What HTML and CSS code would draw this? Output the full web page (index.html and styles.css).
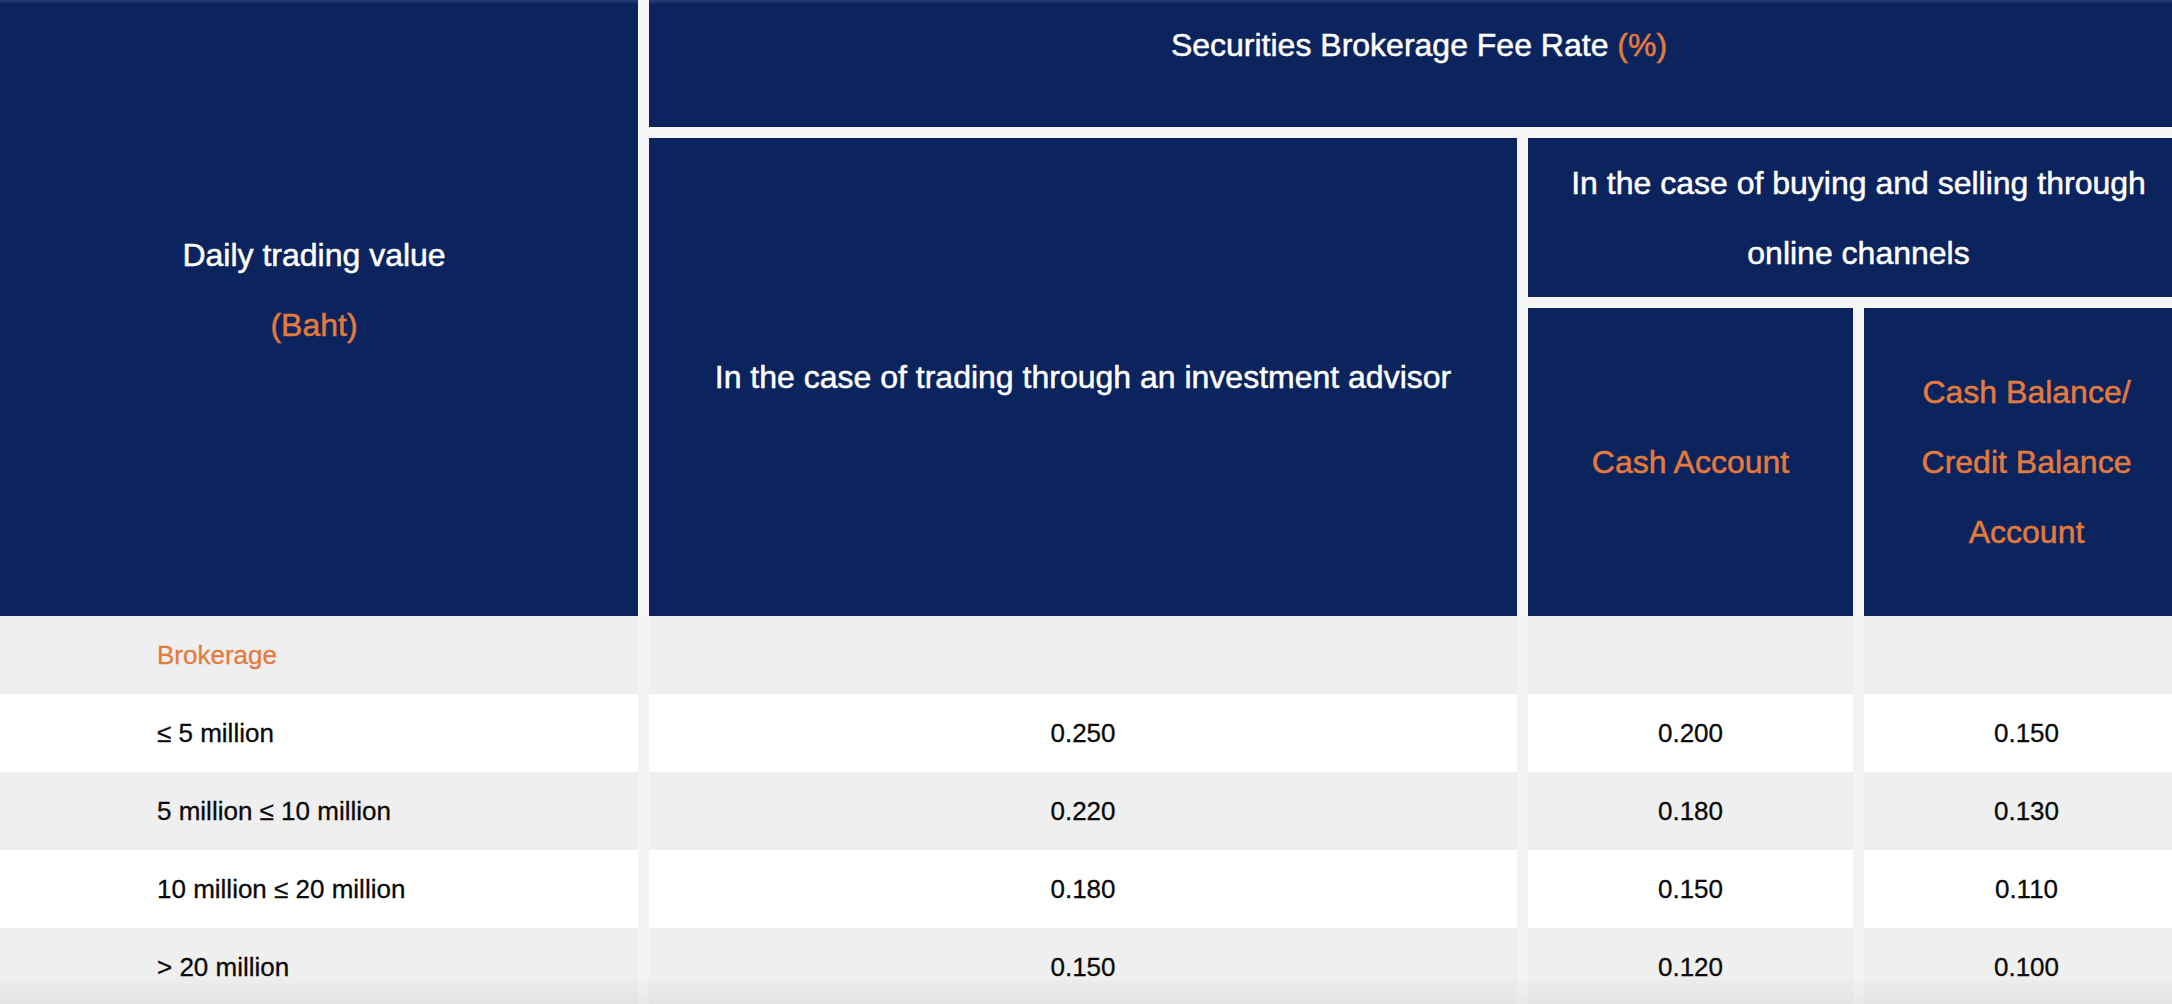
FILE: index.html
```html
<!DOCTYPE html>
<html lang="en">
<head>
<meta charset="utf-8">
<title>Securities Brokerage Fee Rate</title>
<link rel="stylesheet" href="styles.css">
</head>
<body>
<div class="fee-table">
  <div class="head">
    <div class="hcell h-left">
      <span>Daily trading value</span>
      <span class="accent">(Baht)</span>
    </div>
    <div class="hcell h-top">Securities Brokerage Fee Rate&nbsp;<span class="accent">(%)</span></div>
    <div class="hcell h-advisor">In the case of trading through an investment advisor</div>
    <div class="hcell h-online">In the case of buying and selling through online channels</div>
    <div class="hcell h-cash accent">Cash Account</div>
    <div class="hcell h-credit accent">Cash Balance/ Credit Balance Account</div>
  </div>
  <div class="row gray">
    <div class="cell label accent">Brokerage</div>
    <div class="cell"></div>
    <div class="cell"></div>
    <div class="cell"></div>
  </div>
  <div class="row white">
    <div class="cell label">≤ 5 million</div>
    <div class="cell">0.250</div>
    <div class="cell">0.200</div>
    <div class="cell">0.150</div>
  </div>
  <div class="row gray">
    <div class="cell label">5 million ≤ 10 million</div>
    <div class="cell">0.220</div>
    <div class="cell">0.180</div>
    <div class="cell">0.130</div>
  </div>
  <div class="row white">
    <div class="cell label">10 million ≤ 20 million</div>
    <div class="cell">0.180</div>
    <div class="cell">0.150</div>
    <div class="cell">0.110</div>
  </div>
  <div class="row gray">
    <div class="cell label">&gt; 20 million</div>
    <div class="cell">0.150</div>
    <div class="cell">0.120</div>
    <div class="cell">0.100</div>
  </div>
</div>
<div class="shade-bottom"></div>
<div class="shade-top"></div>
</body>
</html>
```

FILE: styles.css
```css
html, body {
  margin: 0;
  padding: 0;
}

body {
  width: 2172px;
  height: 1004px;
  overflow: hidden;
  background: #f5f5f8;
  font-family: "Liberation Sans", Arial, Helvetica, sans-serif;
  position: relative;
}

.fee-table {
  width: 2189px;
}

.head {
  display: grid;
  grid-template-columns: 638px 868px 325px 325px;
  grid-template-rows: 127px 159px 308px;
  column-gap: 11px;
  row-gap: 11px;
  background: #f5f5f8;
}

.hcell {
  background: #0b245e;
  color: #ffffff;
  font-size: 32px;
  line-height: 70px;
  text-align: center;
  display: flex;
  flex-direction: column;
  align-items: center;
  justify-content: center;
  -webkit-text-stroke: 0.5px currentColor;
}

.h-left {
  grid-column: 1;
  grid-row: 1 / 4;
  padding: 0 10px 36px 0;
}

.h-top {
  grid-column: 2 / 5;
  grid-row: 1;
  flex-direction: row;
  padding-bottom: 38px;
}

.h-advisor {
  grid-column: 2;
  grid-row: 2 / 4;
}

.h-online {
  grid-column: 3 / 5;
  grid-row: 2;
  padding: 0 20px;
}

.h-cash {
  grid-column: 3;
  grid-row: 3;
}

.h-credit {
  grid-column: 4;
  grid-row: 3;
  padding: 0 30px;
}

.accent {
  color: #e27b3d;
}

.row {
  display: grid;
  grid-template-columns: 638px 868px 325px 325px;
  column-gap: 11px;
  height: 78px;
  background: #f4f4f7;
}

.cell {
  display: flex;
  align-items: center;
  justify-content: center;
  font-size: 26px;
  color: #0a0a0a;
  -webkit-text-stroke: 0.3px currentColor;
}

.row.gray .cell {
  background: #efefef;
}

.row.white .cell {
  background: #ffffff;
}

.cell.label {
  justify-content: flex-start;
  padding-left: 157px;
}

.cell.label.accent {
  color: #e27b3d;
}

.shade-bottom {
  position: absolute;
  left: 0;
  right: 0;
  bottom: 0;
  height: 30px;
  background: linear-gradient(to bottom, rgba(0, 0, 0, 0), rgba(0, 0, 0, 0.05));
  pointer-events: none;
}

.shade-top {
  position: absolute;
  left: 0;
  right: 0;
  top: 0;
  height: 4px;
  background: linear-gradient(to bottom, rgba(255, 255, 255, 0.12), rgba(255, 255, 255, 0));
  pointer-events: none;
}
```
